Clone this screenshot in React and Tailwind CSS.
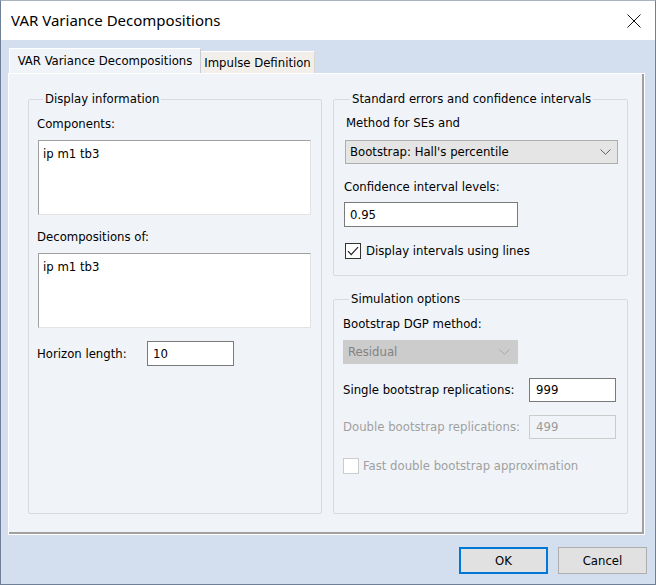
import React from "react";

function Chevron({ color = "#606060" }) {
  return (
    <svg width="11" height="6" viewBox="0 0 11 6" className="shrink-0">
      <polyline points="0.5,0.5 5.5,5.3 10.5,0.5" fill="none" stroke={color} strokeWidth="1" />
    </svg>
  );
}

function Checkbox({ checked, disabled }) {
  return (
    <div
      className={`w-[16px] h-[16px] shrink-0 bg-white border flex items-center justify-center ${
        disabled ? "border-[#cccccc]" : "border-[#333333]"
      }`}
    >
      {checked && (
        <svg width="14" height="14" viewBox="0 0 14 14">
          <polyline points="2,7.2 5.2,10.6 12,3.2" fill="none" stroke="#222" strokeWidth="1.2" />
        </svg>
      )}
    </div>
  );
}

function Group({ title, className, children }) {
  return (
    <fieldset className={`border border-[#d7dade] rounded-[2px] ${className}`}>
      <legend className="ml-[6px] px-[2px] leading-[16px]">{title}</legend>
      {children}
    </fieldset>
  );
}

export default function App() {
  return (
    <div className="w-[656px] h-[585px] bg-[#d3dfef] border border-[#6f7f95] border-t-[#a9b2bf] flex flex-col font-['DejaVu_Sans_Condensed','Liberation_Sans',sans-serif] text-[13px] text-black">
      {/* title bar */}
      <div className="h-[39px] bg-white flex items-center justify-between pl-[10px] pr-[14px] shrink-0">
        <span className="font-['Noto_Sans',sans-serif] text-[15px]">VAR Variance Decompositions</span>
        <svg width="14" height="14" viewBox="0 0 14 14">
          <line x1="0.5" y1="0.5" x2="13.5" y2="13.5" stroke="#111" strokeWidth="1" />
          <line x1="13.5" y1="0.5" x2="0.5" y2="13.5" stroke="#111" strokeWidth="1" />
        </svg>
      </div>

      {/* tabs */}
      <div className="flex items-end ml-[8px] mt-[9px] h-[24px] shrink-0 relative z-10">
        <div className="h-[25px] w-[192px] bg-[#f0f4f9] border-l border-t border-white border-r border-r-[#c8ccd2] flex items-center justify-center pb-[1px]">
          VAR Variance Decompositions
        </div>
        <div className="h-[22px] w-[114px] bg-[#f2efeb] border-t border-r border-[#d9d6d2] border-t-white flex items-center justify-center">
          Impulse Definition
        </div>
      </div>

      {/* panel */}
      <div className="ml-[7px] w-[637px] h-[462px] shrink-0 bg-[#f0f4f9] border border-white shadow-[inset_-2px_-2px_0_#a0a0a0] pl-[19px] pt-[17px] flex gap-[11px]">
        <Group title="Display information" className="w-[294px] h-[423px] pl-[8px]">
          <div className="leading-[16px] mt-[9px]">Components:</div>
          <div className="mt-[8px] ml-[1px] w-[273px] h-[75px] bg-white border border-[#a0a0a0] border-r-[#e3e3e3] border-b-[#e3e3e3] px-[4px] pt-[5px] leading-[16px]">
            ip m1 tb3
          </div>
          <div className="leading-[16px] mt-[14px]">Decompositions of:</div>
          <div className="mt-[8px] ml-[1px] w-[273px] h-[75px] bg-white border border-[#a0a0a0] border-r-[#e3e3e3] border-b-[#e3e3e3] px-[4px] pt-[5px] leading-[16px]">
            ip m1 tb3
          </div>
          <div className="flex items-center mt-[13px]">
            <div className="w-[110px]">Horizon length:</div>
            <div className="w-[87px] h-[25px] bg-white border border-[#7a7a7a] flex items-center px-[5px]">10</div>
          </div>
        </Group>

        <div className="flex flex-col gap-[15px]">
          <Group title="Standard errors and confidence intervals" className="w-[295px] h-[185px] pl-[10px]">
            <div className="leading-[16px] mt-[8px] ml-[2px]">Method for SEs and</div>
            <div className="mt-[9px] ml-[1px] w-[273px] h-[24px] bg-[#e5e5e5] border border-[#adadad] flex items-center justify-between pl-[4px] pr-[6px]">
              <span>Bootstrap: Hall's percentile</span>
              <Chevron />
            </div>
            <div className="leading-[16px] mt-[15px]">Confidence interval levels:</div>
            <div className="mt-[7px] w-[174px] h-[25px] bg-white border border-[#7a7a7a] flex items-center px-[5px]">0.95</div>
            <div className="flex items-center mt-[14px] ml-[1px] gap-[5px]">
              <Checkbox checked />
              <span>Display intervals using lines</span>
            </div>
          </Group>

          <Group title="Simulation options" className="w-[295px] h-[223px] pl-[9px]">
            <div className="leading-[16px] mt-[9px]">Bootstrap DGP method:</div>
            <div className="mt-[8px] w-[175px] h-[24px] bg-[#cccccc] flex items-center justify-between pl-[5px] pr-[8px] text-[#838383]">
              <span>Residual</span>
              <Chevron color="#a8a8a8" />
            </div>
            <div className="flex items-center mt-[14px]">
              <div className="w-[186px]">Single bootstrap replications:</div>
              <div className="w-[87px] h-[24px] bg-white border border-[#7a7a7a] flex items-center px-[6px]">999</div>
            </div>
            <div className="flex items-center mt-[13px] text-[#a0a0a0]">
              <div className="w-[186px]">Double bootstrap replications:</div>
              <div className="w-[87px] h-[24px] border border-[#cccccc] flex items-center px-[6px] text-[#9a9a9a]">499</div>
            </div>
            <div className="flex items-center mt-[17px] gap-[4px] text-[#a0a0a0]">
              <Checkbox disabled />
              <span>Fast double bootstrap approximation</span>
            </div>
          </Group>
        </div>
      </div>

      {/* buttons */}
      <div className="flex justify-end gap-[10px] pr-[8px] mt-[12px]">
        <div className="w-[89px] h-[27px] bg-[#e1e1e1] border-2 border-[#0078d7] flex items-center justify-center">OK</div>
        <div className="w-[89px] h-[27px] bg-[#e1e1e1] border border-[#adadad] flex items-center justify-center">Cancel</div>
      </div>
    </div>
  );
}
